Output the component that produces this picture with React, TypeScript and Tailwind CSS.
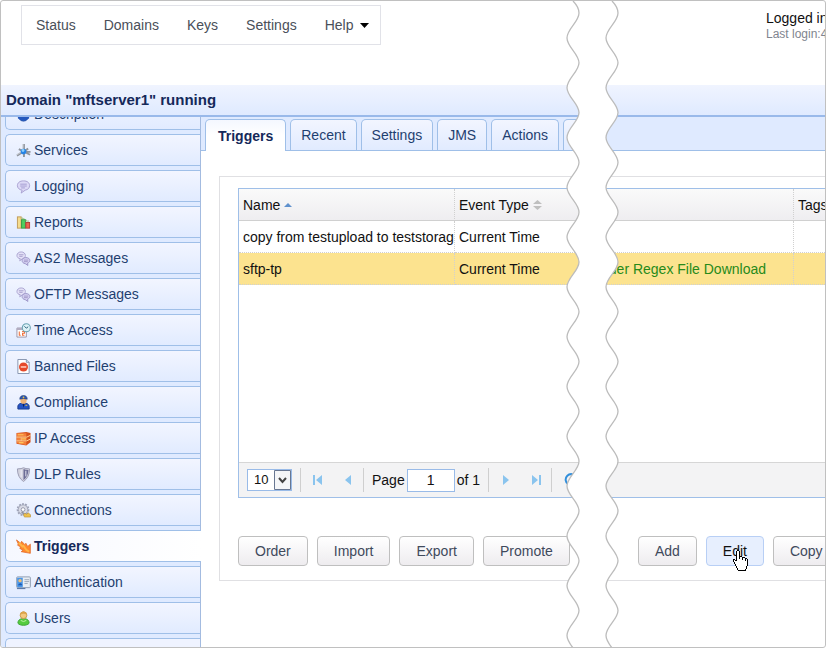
import React from "react";

type IconProps = { children: React.ReactNode };
const Icon = ({ children }: IconProps) => (
  <svg viewBox="0 0 16 16" className="size-[15px] shrink-0" aria-hidden="true">{children}</svg>
);

const bubble = "M8 2C4 2 1.500 4 1.500 7c0 2.600 2 4.500 5 4.900L5.500 15l4.300-3.100C13 11.400 14.500 9.500 14.500 7c0-3-2.500-5-6.500-5z";

const DescriptionIcon = () => (
  <Icon><ellipse cx="8" cy="8" rx="6" ry="7" fill="#2f7be0" stroke="#1c3f98" /><path d="M2 9q6 3 12 0v3q-6 5-12 0z" fill="#2458bd" /></Icon>
);
const ServicesIcon = () => (
  <Icon>
    <path d="M8.500 1v14M1 13.500 13 6M3 6.500l12 6M8 9.500h7.500" stroke="#8f949c" strokeWidth="2" fill="none" />
    <path d="M7.500 1v7M1 12.500l4-2.500" stroke="#c3c7ce" strokeWidth="1.200" />
    <circle cx="8" cy="9" r="3" fill="#2684e6" /><circle cx="7.500" cy="8" r="1.500" fill="#8bd0ff" />
  </Icon>
);
const LoggingIcon = () => (
  <Icon><path d={bubble} fill="#dcd9f6" stroke="#a79fd0" /><path d="M4.500 5.500h7M4.500 7.500h7M5.500 9.500h4" stroke="#9d94cc" strokeWidth=".9" /></Icon>
);
const ReportsIcon = () => (
  <Icon>
    <rect x="1.500" y="2" width="4" height="12" fill="#f5dc8d" stroke="#c09a58" />
    <rect x="6" y="5" width="4" height="9" fill="#4fd060" stroke="#2f9a40" />
    <rect x="10.500" y="8" width="4" height="6" fill="#ed6450" stroke="#b53c32" />
    <path d="M6.500 2.500v1.500h2.500M11 5v1.500h3" fill="none" stroke="#9cc078" />
  </Icon>
);
const MessagesIcon = () => (
  <Icon>
    <path d="M5.500 1C3 1 1 2.600 1 4.700 1 6.600 2.500 8 4.500 8.200L4 10.500l2.800-2.300C9 7.800 10 6.500 10 4.700 10 2.600 8 1 5.500 1z" fill="#e4e1f7" stroke="#a9a2cf" />
    <path d="M10.500 7C8 7 6.500 8.300 6.500 10.200c0 1.800 1.400 3 3.200 3.200l3 2-.4-2.400c1.500-.5 2.500-1.500 2.500-2.900C14.800 8.300 13 7 10.500 7z" fill="#d3cff0" stroke="#9b93c6" />
    <path d="M3 4h5M3.500 5.700h3.500M8.500 9.700h4.500M8.500 11.300h4" stroke="#988fc2" strokeWidth=".8" />
  </Icon>
);
const TimeIcon = () => (
  <Icon>
    <path d="M1 5.500h10V15H1z" fill="#fff" stroke="#9a92a5" /><path d="M1 5h9v2.500H1z" fill="#b3adc0" />
    <path d="M3.500 9v4M3 13h2M6.500 9h2.500v2H7v2h2" fill="none" stroke="#ef6b35" strokeWidth="1.100" />
    <circle cx="11" cy="5" r="4.300" fill="#ddf2f7" stroke="#6ba3b3" strokeWidth="1.100" /><path d="M9 3.500 11 5.500 13 4" fill="none" stroke="#225b78" />
  </Icon>
);
const BannedIcon = () => (
  <Icon><path d="M2 .5h9L14 3.500v12H2z" fill="#fff" stroke="#8190ad" /><path d="M11 .5v3h3" fill="#d8e1f2" stroke="#8190ad" /><circle cx="8" cy="8.500" r="4.800" fill="#e5482a" /><path d="M5 8.500h6" stroke="#ffc3b0" strokeWidth="1.800" /></Icon>
);
const ComplianceIcon = () => (
  <Icon>
    <path d="M2 15v-3c0-2 2-3.500 6-3.500s6 1.500 6 3.500v3z" fill="#2453c4" stroke="#1b3b8c" />
    <circle cx="8" cy="6" r="3.300" fill="#eeb276" /><path d="M4 4.500C4 1.500 6 .5 8 .5s4 1 4 4l-4-.8z" fill="#2d58b5" stroke="#17346f" strokeWidth=".6" />
    <circle cx="8" cy="2.500" r=".9" fill="#f4c633" /><path d="M7 9.500h2l-1 4z" fill="#0b2260" /><path d="M10 11h2" stroke="#f4c633" />
  </Icon>
);
const FirewallIcon = () => (
  <Icon>
    <path d="M.5 2 11 1l4.500 1v10L11 15.500.5 13.500z" fill="#d4531c" />
    <path d="M1 2.500h10v3.500H1zM1 7h4v3H1zM6 7h5v3H6zM1 11h10v3.800L1 13z" fill="#f5803a" />
    <path d="M.5 6.500h11l4-2M.5 10.500h11l4-2M5.500 7v3.500" fill="none" stroke="#ffd99a" /><path d="M6 8.500h5M2 4h6M3 12.500h5" stroke="#ffc35a" strokeWidth="1.300" />
  </Icon>
);
const ShieldIcon = () => (
  <Icon><path d="M1.500 2Q6 2 8 .8 10 2 14.500 2q0 9-6.500 13.500Q1.500 11 1.500 2z" fill="#d3d3df" stroke="#9a9bb2" /><path d="M8 2v12Q13 10 13.300 3.200 10 3 8 2z" fill="#6c6d96" /><path d="M5.500 3v8M10.500 4v6" stroke="#efeff7" /></Icon>
);
const ConnectionsIcon = () => (
  <Icon>
    <circle cx="7.500" cy="7" r="5.800" fill="none" stroke="#9da1b6" strokeWidth="2" strokeDasharray="2 1.200" />
    <circle cx="7.500" cy="7" r="5" fill="#d9dbe6" stroke="#a3a7ba" /><circle cx="7.500" cy="7" r="2" fill="#fff" stroke="#9295a9" />
    <path d="m6 9.500 5 4" stroke="#8c90a0" strokeWidth="1.600" /><path d="M8 12.500 9.500 11l2 1 1.500-1.500 2.500 2V15H9z" fill="#edc04c" stroke="#b48a30" strokeWidth=".6" />
  </Icon>
);
const TriggersIcon = () => (
  <Icon>
    <path d="M.5 1 5 4.500l1-2L9.500 6l1-1.500L12.500 8 15.300 5.500V15.300L5.500 13.500 7.500 12 4 10l1-1.500-3.500-2 1-1z" fill="#ff8a2e" stroke="#e0682a" strokeWidth=".8" />
    <path d="m3 4 4 4 1-.5 3 4 3 2" stroke="#ffb648" strokeWidth="2" fill="none" />
  </Icon>
);
const AuthIcon = () => (
  <Icon>
    <rect x=".7" y="2" width="14.600" height="11.500" rx="1" fill="#e8edf4" stroke="#8b99ae" /><path d="M1.200 3h6v10h-6z" fill="#4a95e6" />
    <circle cx="4.300" cy="6" r="1.800" fill="#f0bf75" /><path d="M2 11q2.500-4.500 5 0" fill="#1959b5" /><path d="M9 5h5M9 7h5M9 9h3.500" stroke="#9aa6b6" /><path d="M1 14.500h9" stroke="#46689b" />
  </Icon>
);
const UsersIcon = () => (
  <Icon><path d="M2 13c0-3 2-5 6-5s6 2 6 5c-2 3-10 3-12 0z" fill="#55cc3f" stroke="#3da234" /><circle cx="8" cy="4.500" r="3.600" fill="#f3c87e" stroke="#c99a4c" /><path d="M4.500 4Q5 .6 8 .6T11.500 4Q8 2 4.500 4z" fill="#dca44a" /><path d="M5 10q3 2.500 6 0" stroke="#bff2a5" fill="none" /></Icon>
);

const sections = [
  { name: "Description", icon: DescriptionIcon },
  { name: "Services", icon: ServicesIcon },
  { name: "Logging", icon: LoggingIcon },
  { name: "Reports", icon: ReportsIcon },
  { name: "AS2 Messages", icon: MessagesIcon },
  { name: "OFTP Messages", icon: MessagesIcon },
  { name: "Time Access", icon: TimeIcon },
  { name: "Banned Files", icon: BannedIcon },
  { name: "Compliance", icon: ComplianceIcon },
  { name: "IP Access", icon: FirewallIcon },
  { name: "DLP Rules", icon: ShieldIcon },
  { name: "Connections", icon: ConnectionsIcon },
  { name: "Triggers", icon: TriggersIcon, active: true },
  { name: "Authentication", icon: AuthIcon },
  { name: "Users", icon: UsersIcon },
];

const tabs = ["Triggers", "Recent", "Settings", "JMS", "Actions"];

const ToolButton = ({ children }: { children: string }) => (
  <button className="h-[30px] shrink-0 rounded-[4px] border border-[#bfbfbf] bg-linear-to-b from-white to-[#eeecef] px-4 text-[#3f4a5c]">{children}</button>
);

const PageButton = ({ label, d }: { label: string; d: string }) => (
  <button aria-label={label} className="flex size-[30px] shrink-0 items-center justify-center">
    <svg viewBox="0 0 10 12" className="h-3 w-2.5" aria-hidden="true"><path d={d} fill="#8ac4ee" /></svg>
  </button>
);

const Divider = () => <span className="h-6 w-px shrink-0 bg-[#cfcfcf]" />;

// Both torn edges share the same vertical rhythm: a crest or trough every 24.9 units.
const step = 24.9;
const crests = Array.from({ length: 27 }, (_, i) => 12 + i * step);

const tearDown = (left: number) => {
  const right = left + 12;
  const x = (i: number) => (i % 2 ? left : right);
  let d = `M${left + 6} 0Q${right} 6 ${right} 12`;
  for (let i = 1; i < crests.length; i++) {
    d += `C${x(i - 1)} ${crests[i] - 16} ${x(i)} ${crests[i] - 9} ${x(i)} ${crests[i]}`;
  }
  return d;
};
const tearUp = (left: number) => {
  const right = left + 12;
  const x = (i: number) => (i % 2 ? left : right);
  const last = crests.length - 1;
  let d = `L${x(last)} ${crests[last]}`;
  for (let i = last; i > 0; i--) {
    d += `C${x(i)} ${crests[i] - 9} ${x(i - 1)} ${crests[i] - 16} ${x(i - 1)} ${crests[i - 1]}`;
  }
  return d + `Q${right} 6 ${left + 6} 0Z`;
};

const TornStrip = () => (
  <div className="pointer-events-none absolute inset-y-0 left-[565px] w-[53px] overflow-hidden">
    <svg viewBox="0 0 53 648" className="h-[648px] w-[53px]" aria-hidden="true">
      <path d={tearDown(1) + tearUp(40)} fill="#fff" />
      <path d={tearDown(1)} fill="none" stroke="#bcbcbc" strokeWidth="1.300" />
      <path d={tearDown(40)} fill="none" stroke="#bcbcbc" strokeWidth="1.300" />
    </svg>
  </div>
);

const Hand = () => (
  <svg viewBox="0 0 17 22" className="pointer-events-none absolute top-3.5 left-[26px] h-[22px] w-[17px]" shapeRendering="crispEdges" aria-hidden="true">
    <path d="M5 1h2v1h1v5h2v1h2v1h2v1h1v1h1v5h-1v3h-1v2H6v-2H5v-2H4v-2H3v-1H2v-2H1v-2h3v1h1V2h0z" fill="#fff" />
    <path d="M5 0h2v1H5zM4 1h1v10H4zM7 1h1v8H7zM8 6h2v1H8zM10 7h1v3h-1zM11 7h2v1h-2zM13 8h1v3h-1zM14 8h1v1h-1zM15 9h1v7h-1zM14 16h1v3h-1zM13 19h1v2h-1zM6 20h8v1H6zM5 18h1v2H5zM4 16h1v2H4zM3 14h1v2H3zM2 12h1v2H2zM1 10h1v2H1zM1 9h2v1H1zM3 10h1v1H3z" fill="#000" />
  </svg>
);

export default function App() {
  return (
    <div className="relative flex h-screen flex-col overflow-hidden rounded-[3px] border border-[#c0c0c0] bg-white font-['Liberation_Sans',Arial,sans-serif] text-sm leading-[18px] text-[#111]">
      <header className="flex h-[84px] shrink-0 items-start justify-between">
        <nav className="mt-1 ml-5 flex h-10 items-center border border-[#e1e2e8] text-[#4a4f59]">
          <a href="#status" className="px-3.5">Status</a>
          <a href="#domains" className="px-3.5">Domains</a>
          <a href="#keys" className="px-3.5">Keys</a>
          <a href="#settings" className="px-3.5">Settings</a>
          <a href="#help" className="flex items-center gap-[7px] pr-[11px] pl-3.5">
            Help
            <svg viewBox="0 0 9 5" className="h-[5px] w-[9px]" aria-hidden="true"><path d="M0 0h9L4.500 5z" fill="#000" /></svg>
          </a>
        </nav>
        <div className="mt-2 w-[59px] overflow-hidden whitespace-nowrap">
          <p>Logged in</p>
          <p className="text-xs leading-[14px] text-[#80858f]">Last login:4</p>
        </div>
      </header>

      <h1 className="h-8 shrink-0 border-b-2 border-[#99b9ea] bg-linear-to-b from-[#f0f4ff] to-[#dfeaff] pl-[5px] text-[15px] leading-[30px] font-bold text-[#15295a]">Domain "mftserver1" running</h1>

      <div className="flex min-h-0 flex-1">
        <aside className="w-[200px] shrink-0 overflow-hidden bg-[#dfeaff] pl-1">
          <ul className="-mt-[19px] flex flex-col gap-1 border-r border-[#a3bbe0]">
            {sections.map(({ name, icon: Glyph, active }) => (
              <li key={name} className={active ? "-mr-px" : ""}>
                <a
                  href="#section"
                  className={
                    "flex h-8 items-center gap-[3px] rounded-l-[5px] border border-r-0 border-[#9fbfe8] pl-2.5 " +
                    (active ? "bg-linear-to-r from-[#f6f8ff] to-white font-bold text-[#15295a]" : "bg-linear-to-b from-[#f2f5ff] to-[#e1ebff] text-[#1f3f70]")
                  }
                >
                  <Glyph />
                  {name}
                </a>
              </li>
            ))}
            <li className="h-8 rounded-l-[5px] border border-r-0 border-[#9fbfe8] bg-[#eff3ff]" />
          </ul>
        </aside>

        <main className="min-w-0 flex-1 overflow-hidden">
          <div role="tablist" className="flex h-[34px] items-end gap-1 border-b border-[#9fbfe8] bg-[#dfeaff] pl-1">
            {tabs.map((tab, i) => (
              <button
                key={tab}
                role="tab"
                aria-selected={i === 0}
                className={
                  "shrink-0 rounded-t-[5px] border border-b-0 border-[#9fbfe8] " +
                  (i === 0 ? "-mb-px h-8 bg-linear-to-b from-[#f4f7ff] to-white to-50% px-3 font-bold text-[#15295a]" : "h-[31px] bg-linear-to-b from-[#f2f5ff] to-[#e1ebff] px-2.5 text-[#1f3f70]")
                }
              >
                {tab}
              </button>
            ))}
            <span className="h-[31px] w-8 rounded-t-[5px] border border-b-0 border-[#9fbfe8] bg-linear-to-b from-[#f2f5ff] to-[#e1ebff]" />
          </div>

          <section className="mt-[25px] ml-[18px] border border-r-0 border-[#e0e0e3] pt-[11px] pb-3.5 pl-[18px]">
            <div className="border border-r-0 border-[#9fbfe8]">
              <div className="h-[273px] overflow-hidden">
                <table className="w-full table-fixed border-separate border-spacing-0 text-left whitespace-nowrap">
                  <colgroup>
                    <col className="w-[216px]" />
                    <col className="w-[126px]" />
                    <col />
                    <col className="w-[31px]" />
                  </colgroup>
                  <thead>
                    <tr className="h-8 bg-linear-to-b from-[#fafafa] to-[#eeedf0] *:border-b *:border-[#d0d0d0] *:p-0 *:pl-1 *:font-normal">
                      <th className="border-r border-r-[#d0d0d0] [border-right-style:dotted]"><span className="flex items-center gap-1">Name<svg viewBox="0 0 8 4" className="h-1 w-2" aria-hidden="true"><path d="M0 4 4 0l4 4z" fill="#5f91cd" /></svg></span></th>
                      <th><span className="flex items-center gap-1">Event Type<svg viewBox="0 0 9 10" className="h-2.5 w-[9px]" aria-hidden="true"><path d="M0 4 4.500 0 9 4zM0 6h9l-4.500 4z" fill="#bfbfbf" /></svg></span></th>
                      <th className="border-r border-r-[#d0d0d0] [border-right-style:dotted]" />
                      <th>Tags</th>
                    </tr>
                  </thead>
                  <tbody className="[&_td]:h-8 [&_td]:overflow-hidden [&_td]:border-b [&_td]:border-dotted [&_td]:border-[#d0d0d0] [&_td]:p-0 [&_td]:pl-1">
                    <tr><td className="border-r">copy from testupload to teststorage</td><td>Current Time</td><td className="border-r" /><td /></tr>
                    <tr className="bg-[#fce38f]"><td className="border-r">sftp-tp</td><td>Current Time</td><td className="border-r text-right text-[#278a1a]"><span className="pr-[27px]">Folder Regex File Download</span></td><td /></tr>
                  </tbody>
                </table>
              </div>
              <div className="flex h-[35px] items-center border-t border-[#d6d6d6] bg-[#f3f3f4] pl-2">
                <span className="relative mr-2 flex shrink-0">
                  <select aria-label="Rows per page" className="h-[22px] w-[45px] appearance-none border border-[#99bbe8] bg-white pl-1.5 text-[13px] text-[#111]"><option>10</option></select>
                  <svg viewBox="0 0 17 20" className="pointer-events-none absolute top-px right-px h-5 w-[17px]" aria-hidden="true"><path d="M.5.5h16v19H.500z" fill="#f5f6f8" stroke="#687792" /><path d="m5 8 3.500 4L12 8" fill="none" stroke="#444" strokeWidth="2" /></svg>
                </span>
                <Divider />
                <span className="ml-0.5 flex">
                  <PageButton label="First page" d="M0 1h2v10H0zM9 1v10L3 6z" />
                  <PageButton label="Previous page" d="M8 1v10L2 6z" />
                </span>
                <Divider />
                <label className="ml-2 flex items-center">
                  Page
                  <input defaultValue="1" className="mx-0.5 h-[23px] w-12 border border-[#99bbe8] bg-white text-center" />
                </label>
                <span className="mr-2">of 1</span>
                <Divider />
                <span className="ml-0.5 flex">
                  <PageButton label="Next page" d="M2 1v10l6-5z" />
                  <PageButton label="Last page" d="M1 1v10l6-5zM8 1h2v10H8z" />
                </span>
                <Divider />
                <button aria-label="Refresh" className="ml-3">
                  <svg viewBox="0 0 14 14" className="size-3.5" aria-hidden="true"><path d="M12 4A5.500 5.500 0 1 0 12.500 8" fill="none" stroke="#328fdb" strokeWidth="2" /></svg>
                </button>
              </div>
            </div>
            <div className="mt-[38px] flex gap-[9px]">
              <ToolButton>Order</ToolButton>
              <ToolButton>Import</ToolButton>
              <ToolButton>Export</ToolButton>
              <ToolButton>Promote</ToolButton>
              <span className="w-[50px] shrink-0" />
              <ToolButton>Add</ToolButton>
              <span className="relative shrink-0">
                <button className="h-[30px] rounded-[4px] border border-[#b8cff5] bg-[#e7effe] px-4 text-[#111]">Edit</button>
                <Hand />
              </span>
              <ToolButton>Copy</ToolButton>
            </div>
          </section>
        </main>
      </div>
      <TornStrip />
    </div>
  );
}
